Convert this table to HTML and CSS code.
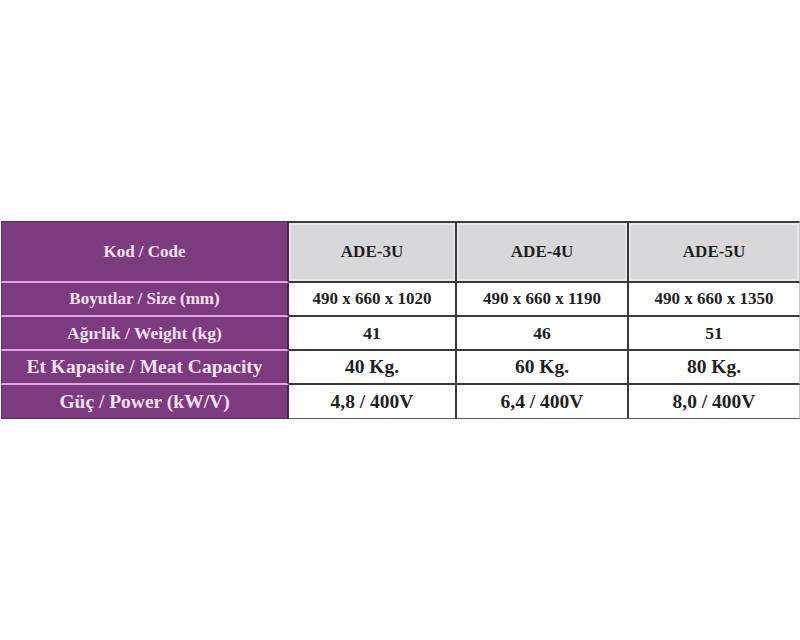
FILE: index.html
```html
<!DOCTYPE html>
<html>
<head>
<meta charset="utf-8">
<link rel="stylesheet" href="styles.css">
</head>
<body>
<div class="page">
  <div class="spec">
    <div class="lbl hdr r0">Kod / Code</div>
    <div class="val head r0">ADE-3U</div>
    <div class="val head r0">ADE-4U</div>
    <div class="val head end r0">ADE-5U</div>

    <div class="lbl r1">Boyutlar / Size (mm)</div>
    <div class="val r1">490 x 660 x 1020</div>
    <div class="val r1">490 x 660 x 1190</div>
    <div class="val end r1">490 x 660 x 1350</div>

    <div class="lbl r2">Ağırlık / Weight (kg)</div>
    <div class="val r2">41</div>
    <div class="val r2">46</div>
    <div class="val end r2">51</div>

    <div class="lbl r3">Et Kapasite / Meat Capacity</div>
    <div class="val r3">40 Kg.</div>
    <div class="val r3">60 Kg.</div>
    <div class="val end r3">80 Kg.</div>

    <div class="lbl last r4">Güç / Power (kW/V)</div>
    <div class="val last r4">4,8 / 400V</div>
    <div class="val last r4">6,4 / 400V</div>
    <div class="val last end r4">8,0 / 400V</div>
  </div>
</div>
</body>
</html>
```
FILE: styles.css
```css
html, body {
  margin: 0;
  padding: 0;
  background: #ffffff;
}

.page {
  width: 800px;
  height: 640px;
  padding-top: 221px;
  padding-left: 1px;
  box-sizing: border-box;
}

.spec {
  display: grid;
  grid-template-columns: 288px 168px 172px 171px;
  grid-template-rows: 62px 34px 34px 34px 34px;
  font-family: "Liberation Serif", "Times New Roman", serif;
  font-weight: bold;
}

.lbl,
.val {
  display: flex;
  align-items: center;
  justify-content: center;
  box-sizing: border-box;
  white-space: nowrap;
}

.lbl {
  background: #7c3a7f;
  color: #f7e0f3;
  border-bottom: 2px solid #e2a4df;
  border-left: 1px solid #5f2d62;
  border-right: 2px solid #4a2a4c;
}

.lbl.hdr {
  border-top: 1px solid #5a2a5c;
}

.lbl.last {
  border-bottom: 1px solid #5a2a5c;
}

.val {
  background: #ffffff;
  color: #1f1f1f;
  border-right: 2px solid #3a3a3a;
  border-bottom: 2px solid #3a3a3a;
}

.val.end {
  border-right: 1px solid #c8c8c8;
}

.val.head {
  background: #d8d8da;
  border-top: 2px solid #3d3d3d;
  box-shadow: inset 0 0 0 2px #e6e6e8;
}

.val.last {
  border-bottom: 1px solid #5a5a5a;
}

.r0 { font-size: 17px; }
.r1 { font-size: 17px; }
.r2 { font-size: 17.5px; }
.r3 { font-size: 19.5px; }
.r4 { font-size: 19.5px; }
```
